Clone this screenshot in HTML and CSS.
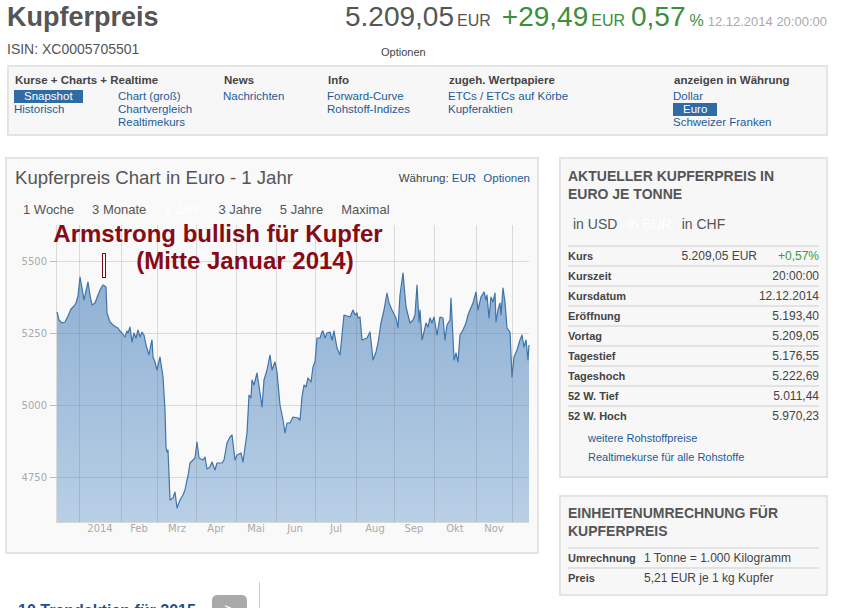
FILE: index.html
```html
<!DOCTYPE html>
<html lang="de">
<head>
  <meta charset="UTF-8" />
  <meta name="viewport" content="width=device-width, initial-scale=1.0" />
  <title>Kupferpreis</title>
  <link rel="stylesheet" href="styles.css">
</head>
<body>
  <div class="page-head">
    <div class="name">
      <h1>Kupferpreis</h1>
      <div class="isin">ISIN: XC0005705501</div>
    </div>
    <div class="quote">
      <div class="quote-line">
        <span class="big">5.209,05</span>
        <span class="unit">EUR</span>
        <span class="big up">+29,49</span>
        <span class="unit up">EUR</span>
        <span class="big up pc">0,57</span>
        <span class="unit up pct">%</span>
        <span class="stamp">12.12.2014 20:00:00</span>
      </div>
      <div class="quote-opts">Optionen</div>
    </div>
  </div>

  <div class="nav-box">
    <div class="nav-group wide">
      <div class="nav-title">Kurse + Charts + Realtime</div>
      <div class="nav-cols">
        <div class="nav-col">
          <a class="active" href="#">Snapshot</a>
          <a href="#">Historisch</a>
        </div>
        <div class="nav-col">
          <a href="#">Chart (groß)</a>
          <a href="#">Chartvergleich</a>
          <a href="#">Realtimekurs</a>
        </div>
      </div>
    </div>
    <div class="nav-group">
      <div class="nav-title">News</div>
      <a href="#">Nachrichten</a>
    </div>
    <div class="nav-group info">
      <div class="nav-title">Info</div>
      <a href="#">Forward-Curve</a>
      <a href="#">Rohstoff-Indizes</a>
    </div>
    <div class="nav-group papers">
      <div class="nav-title">zugeh. Wertpapiere</div>
      <a href="#">ETCs / ETCs auf Körbe</a>
      <a href="#">Kupferaktien</a>
    </div>
    <div class="nav-group last">
      <div class="nav-title">anzeigen in Währung</div>
      <a href="#">Dollar</a>
      <a class="active" href="#">Euro</a>
      <a href="#">Schweizer Franken</a>
    </div>
  </div>

  <div class="content">
    <div class="main-col">
      <div class="chart-box">
        <div class="chart-head">
          <h2>Kupferpreis Chart in Euro - 1 Jahr</h2>
          <div class="chart-opts">Währung: <a href="#">EUR</a> <a class="opt" href="#">Optionen</a></div>
        </div>
        <div class="ranges">
          <span>1 Woche</span>
          <span>3 Monate</span>
          <span class="sel">1 Jahr</span>
          <span>3 Jahre</span>
          <span>5 Jahre</span>
          <span>Maximal</span>
        </div>
        <svg class="chart" width="530" height="334" viewBox="7 218 530 334">
          <defs>
            <linearGradient id="fill" gradientUnits="userSpaceOnUse" x1="0" y1="273" x2="0" y2="522">
              <stop offset="0" stop-color="#8fb0d3"/>
              <stop offset="1" stop-color="#b8cfe6"/>
            </linearGradient>
          </defs>
          <polygon fill="url(#fill)" points="57,312 59,320 62,323 65,322 68,316 71,309 74,306 76,303 78,296 80,277 82,288 84,300 86,291 88,282 90,295 92,305 95,303 98,295 101,288 103,285 106,287 107,313 110,322 113,325 116,327 118,328 120,331 122,333 125,337 127,331 128,333 130,327 132,342 134,333 136,338 138,330 140,337 142,332 144,335 146,345 149,355 151,344 152,340 153,357 155,362 157,370 160,357 163,377 165,410 166,447 167,452 168,450 170,500 173,498 175,492 177,508 180,500 183,495 185,490 187,480 188,476 190,463 193,460 195,458 197,442 199,458 203,460 205,457 207,469 210,467 212,462 215,470 217,463 222,463 224,460 227,443 230,437 232,435 233,443 235,460 237,455 241,453 243,462 247,433 249,395 251,398 252,380 254,385 257,373 260,393 262,407 264,380 267,370 270,355 272,370 275,362 277,372 280,405 283,420 285,433 287,423 290,423 293,417 298,418 300,420 302,397 304,385 306,387 308,378 311,382 313,367 315,362 317,338 320,338 322,332 323,331 325,338 327,333 330,332 332,340 334,331 337,348 340,355 342,335 344,315 347,316 350,317 353,310 355,315 357,313 358,318 360,317 362,340 367,338 370,332 372,350 373,360 376,352 378,343 381,323 384,310 387,293 389,303 392,310 396,318 398,328 400,295 403,273 406,307 410,323 413,320 415,315 417,285 419,322 420,310 422,340 424,332 426,323 428,327 430,318 432,323 434,317 437,335 440,317 443,318 445,340 447,325 450,320 451,298 453,338 454,360 456,353 458,362 460,335 463,330 466,323 468,315 470,310 473,303 476,292 478,310 481,297 484,292 486,300 487,295 489,318 491,297 493,302 495,293 496,322 498,310 500,303 501,315 503,288 505,302 507,328 510,332 512,377 514,357 517,350 520,340 522,335 524,347 526,340 528,360 529,345 529,522 57,522"/>
          <polyline class="trace" points="57,312 59,320 62,323 65,322 68,316 71,309 74,306 76,303 78,296 80,277 82,288 84,300 86,291 88,282 90,295 92,305 95,303 98,295 101,288 103,285 106,287 107,313 110,322 113,325 116,327 118,328 120,331 122,333 125,337 127,331 128,333 130,327 132,342 134,333 136,338 138,330 140,337 142,332 144,335 146,345 149,355 151,344 152,340 153,357 155,362 157,370 160,357 163,377 165,410 166,447 167,452 168,450 170,500 173,498 175,492 177,508 180,500 183,495 185,490 187,480 188,476 190,463 193,460 195,458 197,442 199,458 203,460 205,457 207,469 210,467 212,462 215,470 217,463 222,463 224,460 227,443 230,437 232,435 233,443 235,460 237,455 241,453 243,462 247,433 249,395 251,398 252,380 254,385 257,373 260,393 262,407 264,380 267,370 270,355 272,370 275,362 277,372 280,405 283,420 285,433 287,423 290,423 293,417 298,418 300,420 302,397 304,385 306,387 308,378 311,382 313,367 315,362 317,338 320,338 322,332 323,331 325,338 327,333 330,332 332,340 334,331 337,348 340,355 342,335 344,315 347,316 350,317 353,310 355,315 357,313 358,318 360,317 362,340 367,338 370,332 372,350 373,360 376,352 378,343 381,323 384,310 387,293 389,303 392,310 396,318 398,328 400,295 403,273 406,307 410,323 413,320 415,315 417,285 419,322 420,310 422,340 424,332 426,323 428,327 430,318 432,323 434,317 437,335 440,317 443,318 445,340 447,325 450,320 451,298 453,338 454,360 456,353 458,362 460,335 463,330 466,323 468,315 470,310 473,303 476,292 478,310 481,297 484,292 486,300 487,295 489,318 491,297 493,302 495,293 496,322 498,310 500,303 501,315 503,288 505,302 507,328 510,332 512,377 514,357 517,350 520,340 522,335 524,347 526,340 528,360 529,345"/>
          <g class="grid">
            <line x1="56.5" y1="225" x2="56.5" y2="522"/>
            <line x1="79.5" y1="225" x2="79.5" y2="522"/>
            <line x1="121.5" y1="225" x2="121.5" y2="522"/>
            <line x1="157.5" y1="225" x2="157.5" y2="522"/>
            <line x1="196.5" y1="225" x2="196.5" y2="522"/>
            <line x1="236.5" y1="225" x2="236.5" y2="522"/>
            <line x1="276.5" y1="225" x2="276.5" y2="522"/>
            <line x1="315.5" y1="225" x2="315.5" y2="522"/>
            <line x1="356.5" y1="225" x2="356.5" y2="522"/>
            <line x1="394.5" y1="225" x2="394.5" y2="522"/>
            <line x1="434.5" y1="225" x2="434.5" y2="522"/>
            <line x1="476.5" y1="225" x2="476.5" y2="522"/>
            <line x1="512.5" y1="225" x2="512.5" y2="522"/>
            <line x1="56" y1="261.5" x2="529" y2="261.5"/>
            <line x1="56" y1="333.5" x2="529" y2="333.5"/>
            <line x1="56" y1="405.5" x2="529" y2="405.5"/>
            <line x1="56" y1="477.5" x2="529" y2="477.5"/>
          </g>
          <line class="axis" x1="56" y1="522.5" x2="529" y2="522.5"/>
          <g class="ticks">
            <line x1="50" y1="261.5" x2="56" y2="261.5"/>
            <line x1="50" y1="333.5" x2="56" y2="333.5"/>
            <line x1="50" y1="405.5" x2="56" y2="405.5"/>
            <line x1="50" y1="477.5" x2="56" y2="477.5"/>
          </g>
          <g class="y-labels">
            <text x="47" y="265">5500</text>
            <text x="47" y="337">5250</text>
            <text x="47" y="409">5000</text>
            <text x="47" y="481">4750</text>
          </g>
          <g class="x-labels">
            <text x="100" y="532">2014</text>
            <text x="139" y="532">Feb</text>
            <text x="177" y="532">Mrz</text>
            <text x="216" y="532">Apr</text>
            <text x="256" y="532">Mai</text>
            <text x="295" y="532">Jun</text>
            <text x="336" y="532">Jul</text>
            <text x="375" y="532">Aug</text>
            <text x="414" y="532">Sep</text>
            <text x="455" y="532">Okt</text>
            <text x="494" y="532">Nov</text>
          </g>
          <rect class="marker" x="102.5" y="253.5" width="3" height="24"/>
          <g class="note">
            <text x="218" y="242">Armstrong bullish für Kupfer</text>
            <text x="245" y="269">(Mitte Januar 2014)</text>
          </g>
        </svg>
      </div>

      <div class="more">
        <div class="more-title">10 Trendaktien für 2015</div>
        <div class="more-btn">&gt;</div>
        <div class="more-sep"></div>
      </div>
    </div>

    <div class="side-col">
      <div class="side-box">
        <h2>Aktueller Kupferpreis in Euro je Tonne</h2>
        <div class="cur-tabs">
          <span>in USD</span>
          <span class="sel">in EUR</span>
          <span>in CHF</span>
        </div>
        <table class="facts">
          <tr><th>Kurs</th><td>5.209,05 EUR</td><td class="chg">+0,57%</td></tr>
          <tr><th>Kurszeit</th><td colspan="2">20:00:00</td></tr>
          <tr><th>Kursdatum</th><td colspan="2">12.12.2014</td></tr>
          <tr><th>Eröffnung</th><td colspan="2">5.193,40</td></tr>
          <tr><th>Vortag</th><td colspan="2">5.209,05</td></tr>
          <tr><th>Tagestief</th><td colspan="2">5.176,55</td></tr>
          <tr><th>Tageshoch</th><td colspan="2">5.222,69</td></tr>
          <tr><th>52 W. Tief</th><td colspan="2">5.011,44</td></tr>
          <tr><th>52 W. Hoch</th><td colspan="2">5.970,23</td></tr>
        </table>
        <div class="side-links">
          <a href="#">weitere Rohstoffpreise</a>
          <a href="#">Realtimekurse für alle Rohstoffe</a>
        </div>
      </div>

      <div class="side-box units">
        <h2>Einheitenumrechnung für Kupferpreis</h2>
        <table class="conv">
          <tr><th>Umrechnung</th><td>1 Tonne = 1.000 Kilogramm</td></tr>
          <tr><th>Preis</th><td>5,21 EUR je 1 kg Kupfer</td></tr>
        </table>
      </div>
    </div>
  </div>
</body>
</html>
```

FILE: styles.css
```css
body {
  margin: 0;
  font-family: "Liberation Sans", Arial, sans-serif;
  color: #444;
  background: #fff;
}
a {
  color: #1d5b98;
  text-decoration: none;
}

/* header */
.page-head {
  display: flex;
  justify-content: space-between;
  align-items: flex-start;
  padding: 0 20px 0 7px;
}
.page-head h1 {
  margin: 2px 0 0;
  font-size: 27px;
  line-height: 30px;
  color: #555;
}
.isin {
  margin-top: 9px;
  font-size: 14px;
  line-height: 16px;
  color: #555;
}
.quote-line {
  display: flex;
  align-items: baseline;
  margin-top: 2px;
  color: #555;
}
.quote-line .big {
  margin-left: 11px;
  font-size: 28px;
  line-height: 30px;
}
.quote-line .big:first-child {
  margin-left: 0;
}
.quote-line .big.pc {
  margin-left: 6px;
}
.quote-line .unit {
  margin-left: 3px;
  font-size: 16px;
}
.quote-line .pct {
  margin-left: 4px;
}
.up {
  color: #3b8e3b;
}
.stamp {
  margin-left: 4px;
  font-size: 13px;
  color: #aaa;
}
.quote-opts {
  margin: 14px 0 0 36px;
  font-size: 11px;
  line-height: 13px;
  color: #444;
}

/* sub navigation */
.nav-box {
  display: flex;
  margin: 6px 19px 0 7px;
  padding: 7px 5px 5px 6px;
  border: 2px solid #e4e4e4;
  background: #f7f7f7;
  font-size: 11.5px;
  line-height: 13px;
}
.nav-group {
  width: 104px;
}
.nav-group.wide {
  width: 209px;
}
.nav-group.info {
  width: 121px;
}
.nav-group.papers {
  width: 225px;
}
.nav-title {
  margin-bottom: 3px;
  font-weight: bold;
  color: #444;
  white-space: nowrap;
}
.nav-cols {
  display: flex;
}
.nav-col:first-child {
  width: 104px;
}
.nav-group a {
  display: block;
  margin-left: -1px;
  white-space: nowrap;
}
.nav-group a.active {
  display: inline-block;
  padding: 0 10px;
  background: #2f6ca6;
  color: #fff;
}

/* content */
.content {
  display: flex;
  align-items: flex-start;
  gap: 20px;
  margin: 21px 19px 0 5px;
}
.main-col {
  width: 534px;
}
.chart-box {
  border: 2px solid #e4e4e4;
  background: #f9f9f9;
}
.chart-head {
  display: flex;
  justify-content: space-between;
  align-items: center;
  padding: 8px 7px 0 8px;
}
.chart-head h2 {
  margin: 0;
  font-size: 18.6px;
  line-height: 22px;
  font-weight: normal;
  color: #555;
}
.chart-opts {
  font-size: 11.5px;
  color: #444;
}
.chart-opts .opt {
  margin-left: 4px;
}
.ranges {
  display: flex;
  margin-top: 13px;
  padding-left: 7px;
  font-size: 13px;
  line-height: 16px;
  color: #555;
}
.ranges span {
  padding: 0 9px;
}
.ranges .sel {
  color: #fff;
}
.chart {
  display: block;
}
.chart .trace {
  fill: none;
  stroke: #3f74aa;
  stroke-width: 1.2;
  stroke-linejoin: round;
}
.chart .grid line {
  stroke: rgba(110, 110, 110, 0.22);
  stroke-width: 1;
}
.chart .axis {
  stroke: #d8d8d8;
}
.chart .ticks line {
  stroke: #bbb;
}
.chart text {
  font-family: "DejaVu Sans", sans-serif;
  font-size: 10px;
  fill: #aaa;
}
.chart .y-labels text {
  text-anchor: end;
}
.chart .x-labels text {
  text-anchor: middle;
}
.chart .marker {
  fill: #fff;
  stroke: #7a0a12;
  stroke-width: 1;
}
.chart .note text {
  font-family: "Liberation Sans", Arial, sans-serif;
  font-size: 24px;
  font-weight: bold;
  fill: #860b16;
  text-anchor: middle;
}

.more {
  display: flex;
  align-items: flex-start;
  margin-top: 28px;
  padding-left: 13px;
}
.more-title {
  width: 194px;
  margin-top: 19px;
  font-size: 16px;
  line-height: 19px;
  font-weight: bold;
  color: #1f4f8a;
  white-space: nowrap;
}
.more-btn {
  width: 35px;
  height: 30px;
  margin-top: 13px;
  border-radius: 5px;
  background: #aaa;
  color: #fff;
  font-size: 18px;
  line-height: 30px;
  text-align: center;
}
.more-sep {
  width: 1px;
  height: 40px;
  margin-left: 12px;
  background: #ccc;
}

/* side boxes */
.side-col {
  width: 269px;
}
.side-box {
  padding: 8px 7px 9px 7px;
  border: 2px solid #e4e4e4;
  background: #f7f7f7;
}
.side-box h2 {
  margin: 0;
  padding-right: 30px;
  font-size: 14px;
  line-height: 18px;
  font-weight: bold;
  text-transform: uppercase;
  color: #555;
}
.cur-tabs {
  display: flex;
  margin-top: 12px;
  font-size: 14px;
  line-height: 18px;
  color: #555;
}
.cur-tabs span {
  padding: 0 5px;
}
.cur-tabs .sel {
  color: #fff;
}
.facts,
.conv {
  width: 100%;
  margin-top: 12px;
  border-collapse: collapse;
}
.facts tr,
.conv tr {
  border-top: 2px solid #e2e2e2;
}
.facts th,
.conv th {
  padding: 0;
  height: 18px;
  font-size: 11px;
  line-height: 18px;
  font-weight: bold;
  text-align: left;
  color: #444;
}
.facts td,
.conv td {
  padding: 0;
  font-size: 12px;
  line-height: 18px;
  text-align: right;
  color: #444;
}
.facts td.chg {
  width: 62px;
  color: #3b9a3b;
}
.side-links {
  margin-top: 4px;
  padding-left: 20px;
  font-size: 11px;
  line-height: 19px;
}
.side-links a {
  display: block;
}
.side-box.units {
  margin-top: 17px;
  padding: 7px 7px 7px 7px;
}
.conv {
  margin-top: 7px;
}
.conv th {
  width: 76px;
}
.conv td {
  text-align: left;
}
```
